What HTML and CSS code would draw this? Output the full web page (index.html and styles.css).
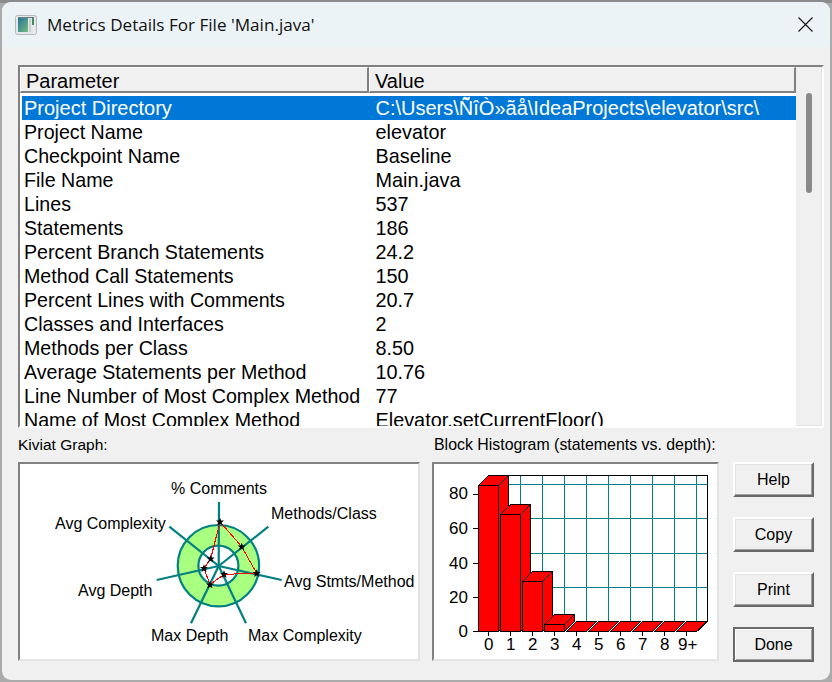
FILE: index.html
```html
<!DOCTYPE html>
<html lang="en">
<head>
<meta charset="utf-8">
<title>Metrics Details</title>
<link rel="stylesheet" href="styles.css">
</head>
<body>
<div class="dialog">
  <header class="titlebar">
    <svg class="app-icon" width="22" height="20" viewBox="0 0 22 20">
      <defs><linearGradient id="ig" x1="0" y1="0" x2="1" y2="1"><stop offset="0" stop-color="#2b6f9c"/><stop offset="1" stop-color="#6fbf7a"/></linearGradient></defs>
      <rect x="0.5" y="0.5" width="21" height="19" rx="2" fill="#e4e8e8" stroke="#b4b8b8"/>
      <rect x="3" y="3" width="10" height="14" fill="url(#ig)"/>
      <rect x="14" y="3" width="2" height="14" fill="#c9cfcf"/>
      <rect x="17" y="3" width="2" height="7" fill="#3f8f5f"/>
      <rect x="3" y="2" width="16" height="1" fill="#6d7f86"/>
    </svg>
    <span class="title">Metrics Details For File 'Main.java'</span>
    <svg class="close" width="15" height="15" viewBox="0 0 15 15"><path d="M0.5 0.5L14.5 14.5M14.5 0.5L0.5 14.5" stroke="#1a1a1a" stroke-width="1.2" fill="none"/></svg>
  </header>
  <main class="content">
    <section class="list">
      <div class="list-main">
        <div class="list-head"><div class="head-cell head-param">Parameter</div><div class="head-cell head-value">Value</div></div>
        <div class="rows">
          <div class="row selected"><span>Project Directory</span><span>C:\Users\Ñ̃îÒ»ãå\IdeaProjects\elevator\src\</span></div>
          <div class="row"><span>Project Name</span><span>elevator</span></div>
          <div class="row"><span>Checkpoint Name</span><span>Baseline</span></div>
          <div class="row"><span>File Name</span><span>Main.java</span></div>
          <div class="row"><span>Lines</span><span>537</span></div>
          <div class="row"><span>Statements</span><span>186</span></div>
          <div class="row"><span>Percent Branch Statements</span><span>24.2</span></div>
          <div class="row"><span>Method Call Statements</span><span>150</span></div>
          <div class="row"><span>Percent Lines with Comments</span><span>20.7</span></div>
          <div class="row"><span>Classes and Interfaces</span><span>2</span></div>
          <div class="row"><span>Methods per Class</span><span>8.50</span></div>
          <div class="row"><span>Average Statements per Method</span><span>10.76</span></div>
          <div class="row"><span>Line Number of Most Complex Method</span><span>77</span></div>
          <div class="row"><span>Name of Most Complex Method</span><span>Elevator.setCurrentFloor()</span></div>
        </div>
      </div>
      <div class="scrollbar"><div class="thumb"></div></div>
    </section>
    <section class="lower">
      <div class="chart-col kiviat-col">
        <div class="caption kiviat-caption">Kiviat Graph:</div>
        <div class="panel">
          <svg class="chart" width="398" height="195" viewBox="20 464 398 195">
            <defs>
              <polygon id="star" points="0,-4 1.1,-1.2 4,-1.2 1.7,0.8 2.6,3.6 0,2 -2.6,3.6 -1.7,0.8 -4,-1.2 -1.1,-1.2"/>
            </defs>
            <circle cx="218.4" cy="565.7" r="40.7" fill="#a9ff7f" stroke="#008080" stroke-width="2.2"/>
            <circle cx="218.4" cy="565.7" r="20" fill="#fff" stroke="#008080" stroke-width="2.2"/>
            <g stroke="#008080" stroke-width="2.2">
              <line x1="218.7" y1="566" x2="219" y2="502"/>
              <line x1="218.7" y1="566" x2="268.3" y2="526.7"/>
              <line x1="218.7" y1="566" x2="281.7" y2="580"/>
              <line x1="218.7" y1="566" x2="246" y2="623.3"/>
              <line x1="218.7" y1="566" x2="191" y2="623.3"/>
              <line x1="218.7" y1="566" x2="156.7" y2="580"/>
              <line x1="218.7" y1="566" x2="169.3" y2="526.7"/>
            </g>
            <polygon class="crisp" points="220,521.7 241.7,546.7 256.7,573.3 224,574.3 210,584.7 204,568.3 210.7,558.7" fill="none" stroke="#ff0000" stroke-width="1"/>
            <g fill="#000">
              <use href="#star" x="220" y="521.7"/><use href="#star" x="241.7" y="546.7"/><use href="#star" x="256.7" y="573.3"/><use href="#star" x="224" y="574.3"/><use href="#star" x="210" y="584.7"/><use href="#star" x="204" y="568.3"/><use href="#star" x="210.7" y="558.7"/>
            </g>
            <g class="chart-text">
              <text x="171" y="494">% Comments</text>
              <text x="271" y="519">Methods/Class</text>
              <text x="55" y="529">Avg Complexity</text>
              <text x="284" y="587">Avg Stmts/Method</text>
              <text x="78" y="596">Avg Depth</text>
              <text x="151" y="641">Max Depth</text>
              <text x="248" y="641">Max Complexity</text>
            </g>
          </svg>
        </div>
      </div>
      <div class="chart-col hist-col">
        <div class="caption">Block Histogram (statements vs. depth):</div>
        <div class="panel">
          <svg class="chart" width="283" height="195" viewBox="434 464 283 195">
            <g class="crisp">
              <g stroke="#008080" stroke-width="1">
                <line x1="488" y1="484.5" x2="707" y2="484.5"/><line x1="488" y1="518.5" x2="707" y2="518.5"/><line x1="488" y1="553.5" x2="707" y2="553.5"/><line x1="488" y1="587.5" x2="707" y2="587.5"/>
                <line x1="520.5" y1="476" x2="520.5" y2="621"/><line x1="542.5" y1="476" x2="542.5" y2="621"/><line x1="564.5" y1="476" x2="564.5" y2="621"/><line x1="586.5" y1="476" x2="586.5" y2="621"/><line x1="608.5" y1="476" x2="608.5" y2="621"/><line x1="630.5" y1="476" x2="630.5" y2="621"/><line x1="652.5" y1="476" x2="652.5" y2="621"/><line x1="674.5" y1="476" x2="674.5" y2="621"/><line x1="696.5" y1="476" x2="696.5" y2="621"/>
              </g>
              <path d="M488 475.5H707.5V621.5L697.5 631.5" fill="none" stroke="#000" stroke-width="1"/>
              <g fill="#000" stroke="#000" stroke-width="1">
                <path d="M478.5 631.5V485.5M473 494.5H478M473 528.5H478M473 563.5H478M473 597.5H478M473 631.5H478"/>
                <path d="M488.5 631.5V636M510.5 631.5V636M532.5 631.5V636M554.5 631.5V636M576.5 631.5V636M598.5 631.5V636M620.5 631.5V636M642.5 631.5V636M664.5 631.5V636M686.5 631.5V636"/>
              </g>
              <g fill="#ff0000" stroke="#000" stroke-width="1">
                <polygon points="478.5,485.5 488.5,475.5 508.5,475.5 508.5,621.5 498.5,631.5 478.5,631.5"/>
                <path d="M478.5 485.5H498.5V631.5M498.5 485.5L508.5 475.5" fill="none"/>
                <polygon points="500.5,514.5 510.5,504.5 530.5,504.5 530.5,621.5 520.5,631.5 500.5,631.5"/>
                <path d="M500.5 514.5H520.5V631.5M520.5 514.5L530.5 504.5" fill="none"/>
                <polygon points="522.5,581.5 532.5,571.5 552.5,571.5 552.5,621.5 542.5,631.5 522.5,631.5"/>
                <path d="M522.5 581.5H542.5V631.5M542.5 581.5L552.5 571.5" fill="none"/>
                <polygon points="544.5,624.5 554.5,614.5 574.5,614.5 574.5,621.5 564.5,631.5 544.5,631.5"/>
                <path d="M544.5 624.5H564.5V631.5M564.5 624.5L574.5 614.5" fill="none"/>
                <polygon points="566.5,631.5 576.5,621.5 596.5,621.5 586.5,631.5"/>
                <polygon points="588.5,631.5 598.5,621.5 618.5,621.5 608.5,631.5"/>
                <polygon points="610.5,631.5 620.5,621.5 640.5,621.5 630.5,631.5"/>
                <polygon points="632.5,631.5 642.5,621.5 662.5,621.5 652.5,631.5"/>
                <polygon points="654.5,631.5 664.5,621.5 684.5,621.5 674.5,631.5"/>
                <polygon points="676.5,631.5 686.5,621.5 706.5,621.5 696.5,631.5"/>
              </g>
            </g>
            <g class="chart-text end">
              <text x="468" y="499">80</text><text x="468" y="534">60</text><text x="468" y="569">40</text><text x="468" y="603">20</text><text x="468" y="637">0</text>
            </g>
            <g class="chart-text middle">
              <text x="488.7" y="650">0</text><text x="510.7" y="650">1</text><text x="532.7" y="650">2</text><text x="554.7" y="650">3</text><text x="576.7" y="650">4</text><text x="598.7" y="650">5</text><text x="620.7" y="650">6</text><text x="642.7" y="650">7</text><text x="664.7" y="650">8</text><text x="687.7" y="650">9+</text>
            </g>
          </svg>
        </div>
      </div>
      <div class="buttons">
        <button class="btn">Help</button>
        <button class="btn">Copy</button>
        <button class="btn">Print</button>
        <button class="btn default">Done</button>
      </div>
    </section>
  </main>
</div>
</body>
</html>
```

FILE: styles.css
```css
* { box-sizing: border-box; }
html, body { margin: 0; height: 682px; overflow: hidden; }
body { background: linear-gradient(#8c8c8c 0 3px, #ababab 3px); padding: 2px; font-family: "Liberation Sans", Arial, sans-serif; color: #000; }
.dialog { width: 828px; height: 678px; background: #f0f0f0; border-radius: 9px; overflow: hidden; display: flex; flex-direction: column; }
.titlebar { flex: none; height: 45px; background: #ecf3f7; display: flex; align-items: center; padding: 0 17px 0 13px; }
.app-icon { flex: none; margin-right: 10px; }
.title { font-family: "Open Sans", "Noto Sans", sans-serif; font-size: 17.1px; color: #111; flex: 1; }
.close { flex: none; }
.content { flex: 1; padding: 18px 0 0 16px; }
.list { width: 806px; height: 363px; display: flex; border: 2px solid; border-color: #808080 #fff #fff #808080; background: #f0f0f0; box-shadow: inset -1px -1px 0 #e3e3e3; }
.list-main { width: 776px; display: flex; flex-direction: column; overflow: hidden; }
.list-head { flex: none; height: 26px; display: flex; }
.head-cell { height: 26px; font-size: 20px; line-height: 26px; background: #f0f0f0; border: 1px solid; border-right-width: 2px; border-bottom-width: 2px; border-color: #fff #808080 #808080 #fff; padding-left: 5px; }
.head-param { width: 349px; }
.head-value { flex: 1; padding-left: 5px; }
.rows { flex: 1; background: #fff; padding: 3px 0 0 2px; overflow: hidden; }
.row { height: 24px; display: grid; grid-template-columns: 351.5px 1fr; font-size: 19.85px; line-height: 24px; padding-left: 2px; white-space: nowrap; }
.row span:first-child { font-size: 19.65px; }
.row.selected, .row.selected span:first-child { background: #0078d7; color: #fff; font-size: 20px; }
.scrollbar { width: 24px; padding: 26px 0 0 10px; }
.thumb { width: 6px; height: 100px; background: #8a8a8a; border-radius: 3px; }
.lower { display: flex; margin-top: 8px; }
.chart-col { display: flex; flex-direction: column; }
.kiviat-col { width: 402px; margin-right: 12px; }
.hist-col { width: 287px; margin-right: 14px; }
.caption { height: 26px; font-size: 15.9px; line-height: 18px; white-space: nowrap; }
.kiviat-caption { font-size: 15.5px; }
.hist-col .caption { margin-left: 2px; }
.panel { height: 199px; background: #fff; border: 2px solid; border-color: #808080 #e3e3e3 #e3e3e3 #808080; }
.chart { display: block; }
.chart-text { font-family: "Liberation Sans", Arial, sans-serif; font-size: 16px; fill: #000; }
.chart-text.end { text-anchor: end; font-size: 17px; }
.chart-text.middle { text-anchor: middle; font-size: 17px; }
.crisp { shape-rendering: crispEdges; }
.buttons { display: flex; flex-direction: column; gap: 20px; padding-top: 26px; }
.btn { width: 81px; height: 35px; font-family: "Liberation Sans", Arial, sans-serif; font-size: 16px; color: #000; background: #f0f0f0; border: 2px solid; border-color: #fff #696969 #696969 #fff; padding: 0; box-shadow: inset -1px -1px 0 #a0a0a0, inset 1px 1px 0 #e3e3e3; }
.btn.default { border-color: #696969; box-shadow: inset 1px 1px 0 #fff, inset -1px -1px 0 #a0a0a0; }
```
